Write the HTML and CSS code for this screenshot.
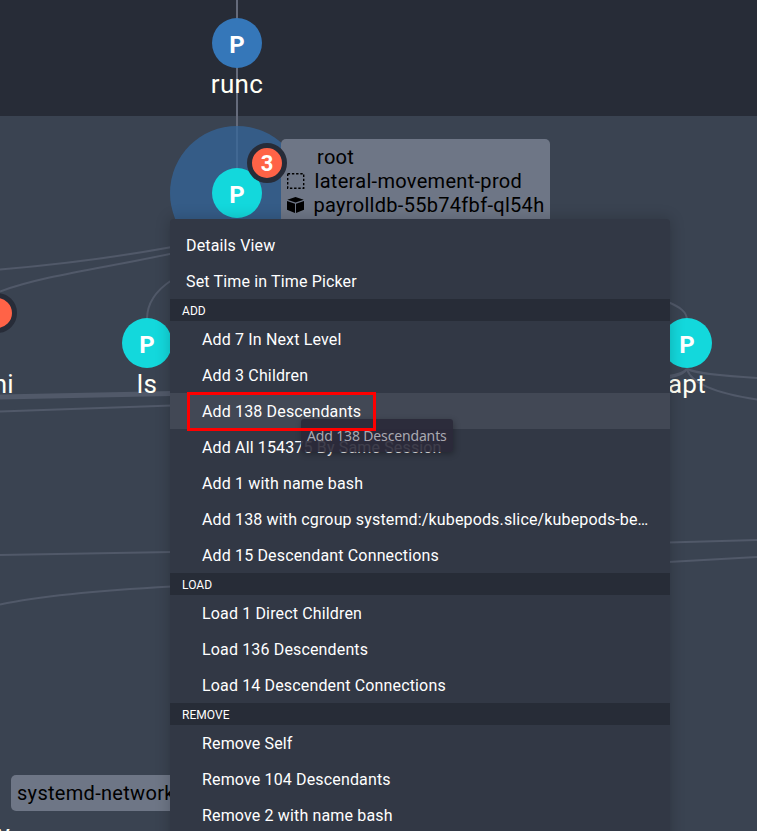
FILE: index.html
```html
<!DOCTYPE html>
<html lang="en">
<head>
<meta charset="utf-8">
<title>Process graph</title>
<link rel="stylesheet" href="styles.css">
</head>
<body>
<main class="canvas">
<svg class="graph" width="757" height="831" viewBox="0 0 757 831">
  <rect class="band" width="757" height="116"/>
  <g class="edges">
    <path class="trunk" d="M237 0V193"/>
    <path d="M0 269.500Q90 262 172 247"/>
    <path d="M0 291.500C45 275 105 268 172 253.500"/>
    <path d="M147 319C147 303 155 291 172 280"/>
    <path class="thick" d="M0 397L172 393.500"/>
    <path d="M0 411.500L172 405.500"/>
    <path d="M0 555L172 552"/>
    <path d="M0 604.500C40 596 90 591 172 586.500"/>
    <path d="M668 302C680 307 687 312 687 320"/>
    <path d="M687 369C683 373 677 375 668 376"/>
    <path d="M687 369C684 374 677 376 668 378"/>
    <path d="M687 369C698 374 724 376 757 378"/>
    <path d="M687 369C692 387 727 395 757 399.500"/>
    <path d="M668 542.500L757 540"/>
    <path d="M668 562L757 557"/>
  </g>
  <circle class="halo" cx="237" cy="193" r="67"/>
  <circle class="node parent" cx="237" cy="43" r="25"/>
  <circle class="node" cx="237" cy="193" r="25"/>
  <circle class="node" cx="147" cy="343" r="25"/>
  <circle class="node" cx="687" cy="343" r="25"/>
  <g class="initial">
    <text x="237" y="53">P</text>
    <text x="237" y="203">P</text>
    <text x="147" y="353">P</text>
    <text x="687" y="353">P</text>
  </g>
  <g class="name">
    <text x="237" y="93">runc</text>
    <text x="147" y="393">ls</text>
    <text x="687" y="393">apt</text>
    <text class="end" x="14" y="393">mini</text>
    <text class="end" x="10" y="843">tty</text>
  </g>
  <rect class="tag" x="281" y="139" width="269" height="100" rx="5"/>
  <g class="tag-text">
    <text x="317" y="164">root</text>
    <text x="314.500" y="188">lateral-movement-prod</text>
    <text x="313.500" y="212">payrolldb-55b74fbf-ql54h</text>
  </g>
  <rect class="dashed" x="287.700" y="173.700" width="16" height="14.600"/>
  <path class="cube" d="M295.500 197L303.700 199.800L295.500 202.600L287.300 199.800ZM287 201L295 203.700V213L287 209.800ZM304 201L296 203.700V213L304 209.800Z"/>
  <rect class="tag" x="11" y="775" width="190" height="36" rx="5"/>
  <g class="tag-text"><text x="17" y="800">systemd-network</text></g>
  <circle class="badge" cx="267" cy="163" r="17.500"/>
  <circle class="badge" cx="-3" cy="313" r="17.500"/>
  <text class="count" x="267" y="171">3</text>
</svg>

<nav class="menu">
  <ul class="group top">
    <li>Details View</li>
    <li>Set Time in Time Picker</li>
  </ul>
  <h2>ADD</h2>
  <ul class="group">
    <li>Add 7 In Next Level</li>
    <li>Add 3 Children</li>
    <li class="active">Add 138 Descendants</li>
    <li>Add All 154375 By Same Session</li>
    <li>Add 1 with name bash</li>
    <li>Add 138 with cgroup systemd:/kubepods.slice/kubepods-be…</li>
    <li>Add 15 Descendant Connections</li>
  </ul>
  <h2>LOAD</h2>
  <ul class="group">
    <li>Load 1 Direct Children</li>
    <li>Load 136 Descendents</li>
    <li>Load 14 Descendent Connections</li>
  </ul>
  <h2>REMOVE</h2>
  <ul class="group">
    <li>Remove Self</li>
    <li>Remove 104 Descendants</li>
    <li>Remove 2 with name bash</li>
  </ul>
</nav>
<div class="tooltip">Add 138 Descendants</div>
<div class="highlight"></div>
</main>
</body>
</html>
```
FILE: styles.css
```css
* { box-sizing: border-box; }
body { margin: 0; font-family: Roboto, "Liberation Sans", sans-serif; }
.canvas { position: relative; width: 757px; height: 831px; overflow: hidden; background: #3a4351; }
.graph { display: block; }
.band { fill: #272c37; }
.edges path { fill: none; stroke: #515969; stroke-width: 2; }
.edges .trunk { stroke: #656b7b; }
.edges .thick { stroke-width: 5; }
.halo { fill: #33679d; fill-opacity: .72; }
.node { fill: #13d8dc; }
.node.parent { fill: #3577b9; }
.initial text { fill: #fff; font-size: 24px; font-weight: 700; text-anchor: middle; }
.name text { fill: #fffff5; font-size: 26px; letter-spacing: .3px; text-anchor: middle; }
.name .end { text-anchor: end; }
.tag { fill: #6e7686; }
.tag-text text { fill: #000; font-size: 20px; letter-spacing: .3px; }
.dashed { fill: none; stroke: #000; stroke-width: 1.4; stroke-dasharray: 2.4 1.8; }
.cube { fill: #000; }
.badge { fill: #ff6347; stroke: #272c38; stroke-width: 5; }
.count { fill: #fff; font-size: 22px; font-weight: 700; text-anchor: middle; }

.menu {
  position: absolute; left: 170px; top: 219px; width: 500px; height: 640px;
  padding-top: 8px; border-radius: 4px; background: #323845; color: #fff;
  box-shadow: 0 5px 5px -3px rgba(0,0,0,.12), 0 0 14px 2px rgba(0,0,0,.16);
}
.group { margin: 0; padding: 0; list-style: none; }
.group li { height: 36px; padding: 0 16px 0 32px; font-size: 16px; line-height: 38px; letter-spacing: .15px; white-space: nowrap; }
.top li { padding-left: 16px; }
.group .active { background: #424855; }
.menu h2 { height: 22px; margin: 0; padding-left: 12px; background: #272c37; font-size: 12px; font-weight: 400; line-height: 25px; letter-spacing: .05px; }
.tooltip {
  position: absolute; left: 301px; top: 419px; width: 152px; height: 33px;
  padding-left: 6px; border-radius: 3px; background: rgba(42,41,57,.9); color: #a9a9b1;
  font: 14px/33px "Noto Sans", sans-serif; letter-spacing: -.15px; white-space: nowrap;
  box-shadow: 1px 2px 6px rgba(0,0,0,.3);
}
.highlight { position: absolute; left: 187px; top: 392px; width: 189px; height: 39px; border: 3px solid #f00; }
```
